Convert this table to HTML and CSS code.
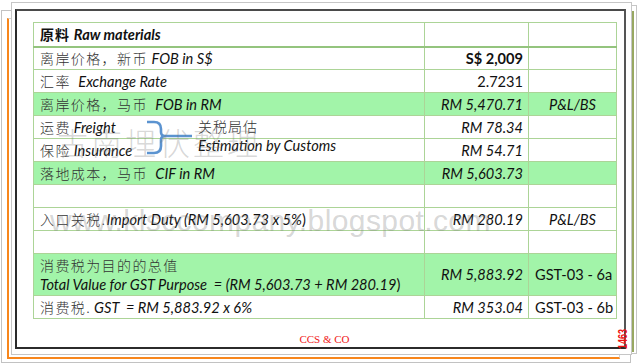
FILE: index.html
```html
<!DOCTYPE html>
<html lang="zh">
<head>
<meta charset="utf-8">
<title>GST Import Calculation</title>
<link rel="stylesheet" href="styles.css">
</head>
<body>
<div class="paper paper-a"></div>
<div class="paper paper-orange"></div>
<div class="paper paper-e"><div class="olive"></div></div>
<div class="paper paper-b"></div>
<div class="frame">
  <div class="sheet">
    <table class="grid">
      <colgroup><col class="c1"><col class="c2"><col class="c3"></colgroup>
      <tr class="head">
        <td><span class="zh b">原料</span> <b><i>Raw materials</i></b></td><td></td><td></td>
      </tr>
      <tr>
        <td><span class="zh">离岸价格，新币</span> <i>FOB in S$</i></td><td class="num"><b>S$ 2,009</b></td><td></td>
      </tr>
      <tr>
        <td><span class="zh">汇率</span>&nbsp; <i>Exchange Rate</i></td><td class="num">2.7231</td><td></td>
      </tr>
      <tr class="hl">
        <td><span class="zh">离岸价格，马币</span>&nbsp; <i>FOB in RM</i></td><td class="num"><i>RM 5,470.71</i></td><td class="ref"><i>P&amp;L/BS</i></td>
      </tr>
      <tr>
        <td><span class="zh">运费</span><i class="gap">Freight</i></td><td class="num"><i>RM 78.34</i></td><td></td>
      </tr>
      <tr>
        <td><span class="zh">保险</span><i class="gap">Insurance</i></td><td class="num"><i>RM 54.71</i></td><td></td>
      </tr>
      <tr class="hl">
        <td><span class="zh">落地成本，马币</span>&nbsp; <i>CIF in RM</i></td><td class="num"><i>RM 5,603.73</i></td><td></td>
      </tr>
      <tr><td></td><td></td><td></td></tr>
      <tr>
        <td><span class="zh">入口关税.</span><i>Import Duty (RM 5,603.73 x 5%</i>)</td><td class="num"><i>RM 280.19</i></td><td class="ref"><i>P&amp;L/BS</i></td>
      </tr>
      <tr><td></td><td></td><td></td></tr>
      <tr class="hl tall">
        <td><span class="zh">消费税为目的的总值</span><br><i>Total Value for GST Purpose&nbsp; = (RM 5,603.73 + RM 280.19</i>)</td><td class="num"><i>RM 5,883.92</i></td><td class="ref">GST-03 - 6a</td>
      </tr>
      <tr>
        <td><span class="zh">消费税.</span><i class="gap">GST&nbsp; = RM 5,883.92 x 6%</i></td><td class="num"><i>RM 353.04</i></td><td class="ref">GST-03 - 6b</td>
      </tr>
    </table>
    <svg class="brace" width="50" height="36" viewBox="0 0 50 36" aria-hidden="true">
      <path d="M2,2 H9 Q16,2 16,9 V12 Q16,16 20,16 H47 M20,16 Q16,16 16,20 V26 Q16,33 9,33 H2" fill="none" stroke="#5b93d0" stroke-width="2.6" stroke-linecap="butt"/>
    </svg>
    <div class="note"><span class="zh">关税局估</span><br><i>Estimation by Customs</i></div>
    <div class="wm wm-cn">古南埋伏整理</div>
    <div class="wm wm-url">www.klsccompany.blogspot.com</div>
  </div>
  <div class="footer">CCS &amp; CO</div>
  <div class="stamp">1463</div>
</div>
</body>
</html>
```

FILE: styles.css
```css
* { box-sizing: border-box; }
html, body { margin: 0; padding: 0; background: #fff; }
body {
  width: 640px;
  height: 364px;
  overflow: hidden;
  position: relative;
  font-family: Lato, "Noto Sans CJK SC", sans-serif;
  color: #111;
}

/* stacked papers behind the main frame */
.paper { position: absolute; background: #fff; }
.paper-a { left: 1px; top: 10px; width: 630px; height: 353px; border: 1px solid #c2c2c2; }
.paper-orange {
  left: 7px; top: 18px; width: 613px; height: 341px;
  border: 1px solid #d2d2d2;
  border-left: 2px solid #f7861c;
  border-bottom: 2px solid #f7861c;
}
.paper-e { left: 590px; top: 5px; width: 47px; height: 349px; border: 1px solid #c6c6c6; }
.olive { position: absolute; right: 2px; top: 5px; width: 3px; height: 341px; background: #98a862; }
.paper-b { left: 11px; top: 2px; width: 621px; height: 353px; border: 1px solid #c6c6c6; }

/* main frame */
.frame {
  position: relative;
  margin: 9px 0 0 15px;
  width: 611px;
  height: 340px;
  border: 2px solid #2b2b2b;
  border-top-color: #4a4a4a;
  border-right-color: #555;
  background: #fff;
  padding: 11px 0 0 16px;
}
.sheet { position: relative; width: 583px; }

.grid { border-collapse: collapse; table-layout: fixed; width: 583px; }
.c1 { width: 391px; }
.c2 { width: 104px; }
.c3 { width: 88px; }
.grid td {
  border: 1px solid #acd497;
  height: 23px;
  padding: 0 6px;
  font-size: 14.6px;
  line-height: 19px;
  white-space: nowrap;
  vertical-align: middle;
}
.grid tr.head td { height: 24px; border-bottom: 2px solid #94c47e; }
.grid tr.hl td { background: #a2f4a9; }
.grid tr.tall td { height: 42px; }
.grid td.num { text-align: right; padding-right: 5px; }
.grid td.ref { text-align: center; }
.gap { margin-left: 3px; }

.zh {
  font-family: "Noto Sans CJK SC", sans-serif;
  font-size: 14px;
  font-weight: 300;
  letter-spacing: 1.4px;
  color: #333;
}
.zh.b { font-weight: 700; color: #111; letter-spacing: 1px; }

/* annotation over the table */
.brace { position: absolute; left: 112px; top: 98px; }
.note {
  position: absolute;
  left: 165px;
  top: 95px;
  font-size: 14.6px;
  line-height: 19px;
  white-space: nowrap;
}
.note .zh { letter-spacing: 1px; }

.wm { position: absolute; white-space: nowrap; pointer-events: none; color: rgba(120, 120, 120, 0.3); }
.wm-cn {
  left: 24px; top: 104px;
  font-family: "Noto Sans CJK SC", sans-serif;
  font-size: 31px; line-height: 32px;
  letter-spacing: 3px;
  font-weight: 300;
}
.wm-url {
  left: 17px; top: 184px;
  font-family: "Liberation Sans", sans-serif;
  font-size: 30px; line-height: 30px;
  letter-spacing: 0.4px;
}

.footer {
  width: 583px;
  margin-top: 14px;
  text-align: center;
  font-family: "Liberation Serif", serif;
  font-size: 11px;
  line-height: 13px;
  color: #f01818;
}
.stamp {
  position: absolute;
  left: 592px;
  top: 322px;
  width: 28px;
  height: 12px;
  font-family: "Liberation Sans", sans-serif;
  font-weight: 700;
  font-size: 12.5px;
  line-height: 12px;
  color: #ee1111;
  transform: rotate(-90deg) scaleX(0.72);
}
```
